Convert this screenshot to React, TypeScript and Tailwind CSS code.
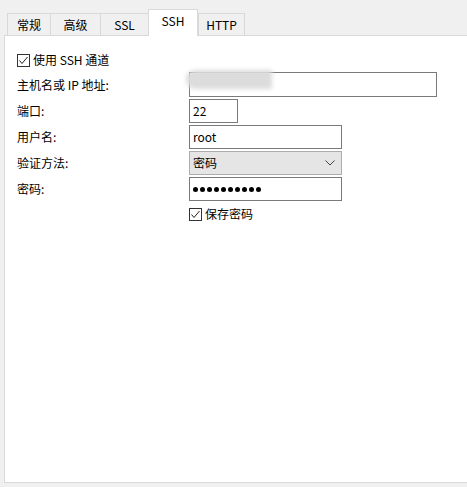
const font = { fontFamily: '"Noto Sans CJK SC", "Liberation Sans", sans-serif' };

const tabs = [
  { label: "常规", w: "w-[43px]" },
  { label: "高级", w: "w-[50px]" },
  { label: "SSL", w: "w-[48px]" },
  { label: "SSH", w: "w-[50px]", active: true },
  { label: "HTTP", w: "w-[47px]" },
];

function CheckBox({ label }: { label: string }) {
  return (
    <label className="flex h-[16px] items-center gap-[3px]">
      <span className="flex h-[13px] w-[13px] items-center justify-center border border-[#333] bg-white">
        <svg width="11" height="11" viewBox="0 0 11 11">
          <path d="M1.5 5.5 L4 8.5 L9.5 2" fill="none" stroke="#222" strokeWidth="1" />
        </svg>
      </span>
      <span>{label}</span>
    </label>
  );
}

function Row({ label, children }: { label: string; children: React.ReactNode }) {
  return (
    <div className="flex items-center">
      <div className="w-[172px] shrink-0">{label}</div>
      {children}
    </div>
  );
}

export default function App() {
  return (
    <div className="h-[487px] w-[467px] overflow-hidden bg-[#f0f0f0] text-[12px] leading-[16px] text-black" style={font}>
      <div className="flex h-[35px] items-end pl-[7px]">
        {tabs.map((t) =>
          t.active ? (
            <div
              key={t.label}
              className={`${t.w} relative z-10 -mb-px flex h-[27px] items-center justify-center border border-b-0 border-[#d9d9d9] bg-white pb-[4px]`}
            >
              {t.label}
            </div>
          ) : (
            <div
              key={t.label}
              className={`${t.w} flex h-[22px] items-center justify-center border border-r-0 border-b-0 border-[#d9d9d9] bg-[#f0f0f0] last:border-r`}
            >
              {t.label}
            </div>
          )
        )}
      </div>
      <div className="ml-[4px] h-[448px] border-t border-l border-b border-[#d9d9d9] bg-white pl-[12px] pt-[16px]">
        <CheckBox label="使用 SSH 通道" />
        <div className="mt-[4px] flex flex-col gap-[2px]">
          <Row label="主机名或 IP 地址:">
            <div className="relative h-[25px] w-[248px] border border-[#7a7a7a] bg-white">
              <div className="absolute -left-[4px] -top-[3px] h-[19px] w-[86px] rounded-l-full bg-[#dcdcdc] blur-[2px]" />
            </div>
          </Row>
          <Row label="端口:">
            <div className="flex h-[24px] w-[49px] items-center border border-[#7a7a7a] px-[3px]">22</div>
          </Row>
          <Row label="用户名:">
            <div className="flex h-[24px] w-[153px] items-center border border-[#7a7a7a] px-[3px]">root</div>
          </Row>
          <Row label="验证方法:">
            <div className="flex h-[24px] w-[153px] items-center justify-between border border-[#adadad] bg-[#e5e5e5] px-[3px]">
              <span>密码</span>
              <svg width="10" height="6" viewBox="0 0 10 6" className="mr-[3px]">
                <path d="M0.5 0.5 L5 5 L9.5 0.5" fill="none" stroke="#444" strokeWidth="1" />
              </svg>
            </div>
          </Row>
          <Row label="密码:">
            <div className="flex h-[24px] w-[153px] items-center gap-[2px] border border-[#7a7a7a] px-[3px]">
              {Array.from({ length: 10 }).map((_, i) => (
                <span key={i} className="h-[5px] w-[5px] rounded-full bg-black" />
              ))}
            </div>
          </Row>
        </div>
        <div className="ml-[172px] mt-[5px]">
          <CheckBox label="保存密码" />
        </div>
      </div>
    </div>
  );
}
